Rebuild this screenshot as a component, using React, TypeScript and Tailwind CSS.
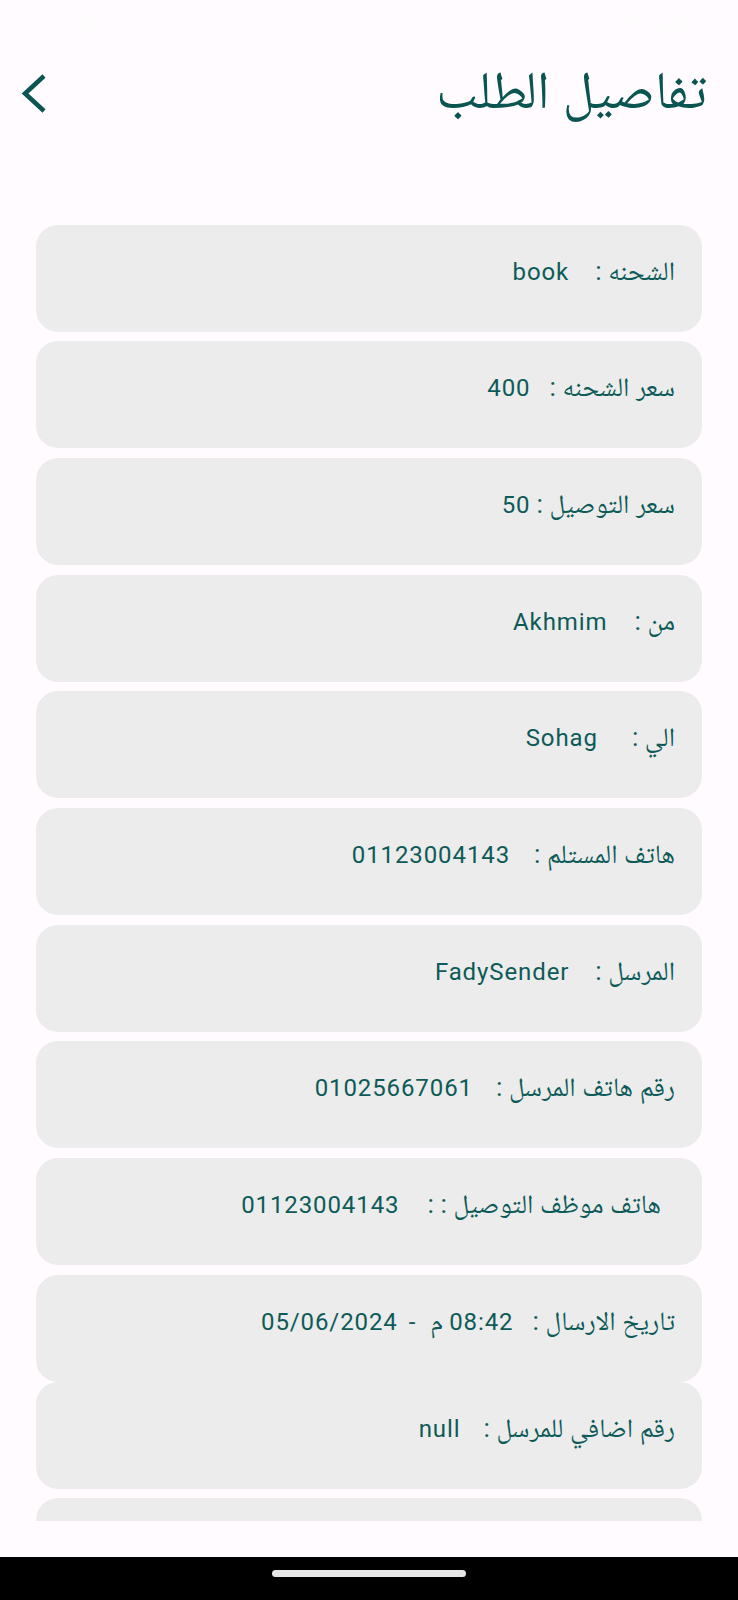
const rows = [
  { label: "الشحنه :", value: "book", gap: "ms-[26px]", pad: "pr-[27px]" },
  { label: "سعر الشحنه :", value: "400", gap: "ms-[19px]", pad: "pr-[27px]" },
  { label: "سعر التوصيل :", value: "50", gap: "ms-[6px]", pad: "pr-[27px]" },
  { label: "من :", value: "Akhmim", gap: "ms-[27px]", pad: "pr-[27px]" },
  { label: "الي :", value: "Sohag", gap: "ms-[34px]", pad: "pr-[27px]" },
  { label: "هاتف المستلم :", value: "01123004143", gap: "ms-[24px]", pad: "pr-[27px]" },
  { label: "المرسل :", value: "FadySender", gap: "ms-[26px]", pad: "pr-[27px]" },
  { label: "رقم هاتف المرسل :", value: "01025667061", gap: "ms-[23px]", pad: "pr-[27px]" },
  { label: "هاتف موظف التوصيل : :", value: "01123004143", gap: "ms-[28px]", pad: "pr-[41px]" },
];

const font = "font-['Roboto','Noto_Naskh_Arabic','Noto_Sans_Arabic','DejaVu_Sans',sans-serif]";

function Card({ children, pad, last }: { children?: React.ReactNode; pad: string; last?: boolean }) {
  return (
    <div
      dir="rtl"
      className={`mx-[36px] h-[107px] shrink-0 rounded-[22px] bg-[#ececec] pt-[28px] ${pad} ${last ? "" : "mb-[9.7px]"}`}
    >
      <div className="flex items-baseline text-[24px] leading-[36px] tracking-[0.9px] text-[#0c5b58]">
        {children}
      </div>
    </div>
  );
}

function Label({ children }: { children: React.ReactNode }) {
  return <span className="text-[26.5px] tracking-normal">{children}</span>;
}

export default function App() {
  return (
    <div className={`flex h-[1600px] w-[738px] flex-col overflow-hidden bg-[#fffbfe] ${font}`}>
      {/* status bar, white icons on a light surface */}
      <div className="flex h-[48px] shrink-0 items-center justify-between px-[14px] text-white opacity-40">
        <div className="flex items-center gap-[10px]">
          <span className="text-[17px] font-medium">1:45</span>
          <svg width="16" height="20" viewBox="0 0 16 20" fill="white"><rect x="1" y="2" width="14" height="16" rx="5" /></svg>
          <svg width="14" height="22" viewBox="0 0 14 22" fill="white"><rect x="1" y="1" width="12" height="20" rx="2" /></svg>
          <svg width="16" height="20" viewBox="0 0 16 20" fill="white"><circle cx="8" cy="10" r="7" /></svg>
        </div>
        <div className="flex items-center gap-[8px] pr-[36px]">
          <svg width="20" height="22" viewBox="0 0 20 22" fill="white"><path d="M2 6 Q10 -2 18 6 L10 18 Z" /></svg>
          <svg width="18" height="20" viewBox="0 0 18 20" fill="white"><path d="M17 2 V18 H1 Z" /></svg>
          <svg width="12" height="22" viewBox="0 0 12 22" fill="white"><rect x="1" y="2" width="10" height="18" rx="2" /></svg>
        </div>
      </div>

      {/* header */}
      <div className="flex h-[96px] shrink-0 items-center justify-between pl-[20px] pr-[31px]">
        <svg width="28" height="40" viewBox="0 0 28 40" fill="none" className="mb-[6px]">
          <path d="M24 3 L5 20.5 L24 38" stroke="#0a5452" strokeWidth="4.5" />
        </svg>
        <h1 dir="rtl" className="mb-[12px] text-[53px] leading-[60px] text-[#0a5452]">
          تفاصيل الطلب
        </h1>
      </div>

      {/* list */}
      <div className="flex h-[1377px] shrink-0 flex-col overflow-hidden pt-[80.5px]">
        {rows.map((r) => (
          <Card key={r.label} pad={r.pad}>
            <Label>{r.label}</Label>
            <span className={r.gap}>{r.value}</span>
          </Card>
        ))}
        <Card pad="pr-[27px]" last>
          <Label>تاريخ الارسال :</Label>
          <span className="ms-[19px]">08:42</span>
          <Label>
            <span className="ms-[6px]">م</span>
          </Label>
          <span className="ms-[14px]">-</span>
          <span className="ms-[11px]">05/06/2024</span>
        </Card>
        <Card pad="pr-[27px]">
          <Label>رقم اضافي للمرسل :</Label>
          <span className="ms-[23px]">null</span>
        </Card>
        <Card pad="pr-[27px]" />
      </div>

      <div className="h-[36px] shrink-0" />

      {/* navigation bar */}
      <div className="flex h-[43px] shrink-0 items-start justify-center bg-black pt-[13px]">
        <div className="h-[7px] w-[194px] rounded-full bg-[#e6e6e6]" />
      </div>
    </div>
  );
}
